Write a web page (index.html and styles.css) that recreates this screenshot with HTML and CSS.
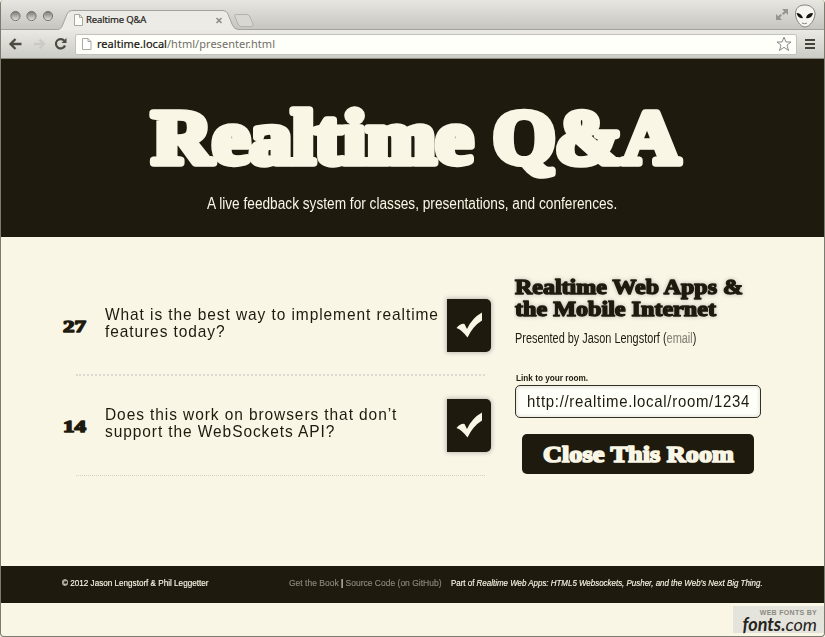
FILE: index.html
```html
<!DOCTYPE html>
<html lang="en">
<head>
<meta charset="utf-8">
<title>Realtime Q&amp;A</title>
<link rel="stylesheet" href="styles.css">
</head>
<body>
<div class="window">
  <div class="chrome">
    <svg class="tabs" width="825" height="30" viewBox="0 0 825 30">
      <defs>
        <linearGradient id="ball" x1="0" y1="0" x2="0" y2="1"><stop offset="0" stop-color="#77766f"/><stop offset="1" stop-color="#e5e4de"/></linearGradient>
      </defs>
      <g fill="url(#ball)" stroke="#777670"><circle cx="15.500" cy="16" r="4.600"/><circle cx="31.500" cy="16" r="4.600"/><circle cx="48" cy="16" r="4.600"/></g>
      <path d="M0 29.500H57C61 29.500 62 27 63 24L67 14Q68.500 10.500 72 10.500H223Q226.500 10.500 228 14L232 24Q234 29.500 238 29.500H825V31H0Z" fill="#ecebe5"/>
      <path d="M0 29.500H57C61 29.500 62 27 63 24L67 14Q68.500 10.500 72 10.500H223Q226.500 10.500 228 14L232 24Q234 29.500 238 29.500H825" fill="none" stroke="#a3a29b"/>
      <path d="M236 14.500H247Q249 14.500 250 17L253 24Q254 26.500 251 26.500H241Q239 26.500 238 24L235 17Q234 14.500 236 14.500Z" fill="#d8d7d1" stroke="#b3b2ab"/>
      <path d="M74.500 14.500H79.500L82.500 17.500V25.500H74.500ZM79.500 14.500V17.500H82.500" fill="#fdfdf8" stroke="#aaa9a2"/>
      <path d="M216.500 18L221.500 23M221.500 18L216.500 23" stroke="#8b8a82" stroke-width="1.500"/>
      <path d="M782 9H788V15L785.800 12.800L783.500 15L782 13.500L784.200 11.200ZM776 14V20H782L779.800 17.800L782 15.500L780.500 14L778.200 16.200Z" fill="#96958e"/>
      <path d="M805 5C811 5 815 9 815 14C815 19 810 27 805 27C800 27 795.500 19 795.500 14C795.500 8 799 5 805 5Z" fill="#f6f5ef" stroke="#85847b"/>
      <path d="M796.500 13Q801 13 803 18Q798 19 796.500 13ZM813 13Q807 13 806 18Q812 19 813 13Z" fill="#16150f"/>
      <path d="M802 23Q804.500 24.500 807 23" fill="none" stroke="#85847b"/>
    </svg>
    <span class="tab-title">Realtime Q&amp;A</span>
    <div class="toolbar">
      <svg class="nav" width="70" height="28" viewBox="0 0 70 28">
        <path d="M10 14H20.500M14.500 9L9.500 14L14.500 19" fill="none" stroke="#4d4b41" stroke-width="2.300"/>
        <path d="M33 14H42M38.500 9.500L43 14L38.500 18.500" fill="none" stroke="#cbcac4" stroke-width="2.300"/>
        <path d="M63.300 10.800A4.700 4.700 0 1 0 64 15.500" fill="none" stroke="#4d4b41" stroke-width="2.200"/><path d="M65.500 8V13H60.500Z" fill="#4d4b41"/>
      </svg>
      <div class="address">
        <svg width="12" height="14" viewBox="0 0 12 14"><path d="M1.500 1.500H7L10 4.500V12.500H1.500ZM7 1.500V4.500H10" fill="#fff" stroke="#aaa9a2"/></svg>
        <span class="url"><b>realtime.local</b>/html/presenter.html</span>
        <svg class="star" width="16" height="16" viewBox="0 0 16 16"><path d="M8 1.200L10 6H15L11 9.200L12.500 14.500L8 11.300L3.500 14.500L5 9.200L1 6H6Z" fill="#fff" stroke="#88877f"/></svg>
      </div>
      <svg width="12" height="12" viewBox="0 0 12 12"><path d="M0 2H10M0 6H10M0 10H10" stroke="#45433a" stroke-width="2.200"/></svg>
    </div>
  </div>

  <header class="hero">
    <h1><svg width="560" height="100" viewBox="0 0 560 100"><g class="display big"><text x="19" y="68" textLength="321" lengthAdjust="spacingAndGlyphs">Realtime</text><text x="360" y="68" textLength="187" lengthAdjust="spacingAndGlyphs">Q&amp;A</text></g></svg></h1>
    <p>A live feedback system for classes, presentations, and conferences.</p>
  </header>

  <main class="content">
    <ul class="questions">
      <li><svg class="votes" width="26" height="20" viewBox="0 0 26 20"><text class="display count" x="1" y="15.500" textLength="23" lengthAdjust="spacingAndGlyphs">27</text></svg>
        <p><span>What is the best way to implement realtime<br>features today?</span></p>
        <button aria-label="Answered"><svg width="44" height="53" viewBox="0 0 44 53"><path d="M9.500 29Q14 24 17.500 25L20 30Q25 19 35 13.500V21.500Q26 27 20.500 38.500Q15 31 9.500 29Z" fill="#faf6e6"/></svg></button></li>
      <li><svg class="votes" width="26" height="20" viewBox="0 0 26 20"><text class="display count" x="1" y="15.500" textLength="23" lengthAdjust="spacingAndGlyphs">14</text></svg>
        <p><span>Does this work on browsers that don’t<br>support the WebSockets API?</span></p>
        <button aria-label="Answered"><svg width="44" height="53" viewBox="0 0 44 53"><path d="M9.500 29Q14 24 17.500 25L20 30Q25 19 35 13.500V21.500Q26 27 20.500 38.500Q15 31 9.500 29Z" fill="#faf6e6"/></svg></button></li>
    </ul>
    <aside class="room">
      <h2><svg width="250" height="54" viewBox="0 0 250 54"><g class="display medium"><text x="1" y="20" textLength="228" lengthAdjust="spacingAndGlyphs">Realtime Web Apps &amp;</text><text x="1" y="42" textLength="201" lengthAdjust="spacingAndGlyphs">the Mobile Internet</text></g></svg></h2>
      <p class="by">Presented by Jason Lengstorf (<a>email</a>)</p>
      <p class="label">Link to your room.</p>
      <div class="field"><span>http://realtime.local/room/1234</span></div>
      <div class="close"><svg width="232" height="40" viewBox="0 0 232 40"><text class="display action" x="21" y="28" textLength="191" lengthAdjust="spacingAndGlyphs">Close This Room</text></svg></div>
    </aside>
  </main>

  <footer class="footer">
    <div class="copy"><span>© 2012 Jason Lengstorf &amp; Phil Leggetter</span></div>
    <div class="links"><span><a>Get the Book</a> | <a>Source Code (on GitHub)</a></span></div>
    <div class="part"><span>Part of <i>Realtime Web Apps: HTML5 Websockets, Pusher, and the Web’s Next Big Thing.</i></span></div>
  </footer>
  <div class="fonts"><span class="small">WEB FONTS BY</span><span class="brand"><b>fonts.</b>com</span></div>
</div>
</body>
</html>
```
FILE: styles.css
```css
* { box-sizing: border-box; }
body { margin: 0; background: #faf6e6; color: #1e1b0e; font-family: "Liberation Sans", sans-serif; }
h1, h2, p, ul { margin: 0; padding: 0; font-weight: normal; }
svg { display: block; flex: none; }
.window { width: 825px; height: 637px; border: 1px solid #7d7b70; border-top: 0; border-radius: 4px; display: flex; flex-direction: column; overflow: hidden; position: relative; }
.chrome { height: 59px; flex: none; position: relative; background: linear-gradient(#e7e6e0, #c7c6c1 28px); }
.tabs { margin-left: -1px; }
.tab-title { position: absolute; left: 85px; top: 14px; font: 9.5px/12px "Noto Sans", sans-serif; color: #25241e; white-space: nowrap; -webkit-text-stroke: .2px; letter-spacing: -.15px; }
.toolbar { height: 29px; display: flex; align-items: center; background: linear-gradient(#eae9e3, #ccccc7); border-bottom: 1px solid #8b8a82; }
.address { width: 722px; height: 21px; margin: 0 8px 0 4px; padding: 0 4px 0 5px; display: flex; align-items: center; background: #fffffa; border: 1px solid #c3c2bc; border-radius: 2px; }
.url { margin-left: 4px; font: 11px/14px "Noto Sans", sans-serif; color: #706f66; white-space: nowrap; letter-spacing: .03px; }
.url b { font-weight: normal; color: #17160f; -webkit-text-stroke: .2px; }
.star { margin-left: auto; }
.hero { height: 178px; flex: none; padding-top: 36px; background: #1e1b0e; color: #faf6e6; display: flex; flex-direction: column; align-items: center; }
.hero h1 { height: 100px; }
.hero p { font-size: 16px; line-height: 18px; white-space: nowrap; transform: scaleX(.854); }

/* Heavy rounded slab lettering */
.display { font-family: "Liberation Serif", serif; font-weight: bold; stroke-linejoin: round; }
.big { font-size: 77px; fill: #faf6e6; stroke: #faf6e6; stroke-width: 7.5px; }
.count { font-size: 16px; fill: #1e1b0e; stroke: #1e1b0e; stroke-width: 1.4px; }
.medium { font-size: 20px; fill: #1e1b0e; stroke: #1e1b0e; stroke-width: 1.4px; filter: drop-shadow(0 0 2px #bbb9ad); }
.action { font-size: 23px; fill: #faf6e6; stroke: #faf6e6; stroke-width: 1.7px; }

/* Condensed running text */
.by, .label, .field span, .questions p span, .footer span { transform-origin: 0 50%; }
.questions p span, .field span, .footer span { display: inline-block; }

.content { height: 329px; flex: none; display: flex; padding: 39px 0 0 61px; }
.questions { width: 423px; list-style: none; }
.questions li { height: 100px; display: flex; align-items: center; position: relative; }
.questions li::after { content: ""; position: absolute; left: 14px; right: 0; bottom: 0; border-bottom: 1px dotted #d2d1c8; }
.questions li:first-child::after { border-bottom: 2px dotted #dcdbd2; }
.questions p { margin: -6px 0 0 17px; width: 341px; flex: none; font-size: 17px; line-height: 17px; letter-spacing: 1px; white-space: nowrap; }
.questions p span { transform: scaleX(.912); }
.questions button { flex: none; width: 44px; height: 53px; margin: -1px -8px 0 1px; padding: 0; border: 0; border-radius: 0 5px 5px 0; background: #1e1b0e; box-shadow: 0 0 4px 1px #bbbab2; }
.room { margin-left: 29px; width: 247px; }
.room h2 { height: 54px; margin-top: -2px; }
.by { font-size: 14px; line-height: 16px; white-space: nowrap; margin: 2px 0 0 1px; transform: scaleX(.779); }
.by a { color: #8b897c; -webkit-text-stroke: .2px; }
.label { margin: 25px 0 0 2px; font-size: 9.5px; line-height: 14px; font-weight: bold; white-space: nowrap; transform: scaleX(.865); }
.field { width: 246px; height: 33px; margin-left: 1px; padding-left: 11px; border: 1px solid #333124; border-radius: 5px; background: #fffffa; font-size: 17px; line-height: 31px; letter-spacing: .8px; white-space: nowrap; box-shadow: inset 0 0 4px #d4d3c8; }
.field span { transform: scaleX(.88); }
.close { width: 232px; height: 40px; margin: 16px 0 0 8px; border-radius: 5px; background: #1e1b0e; }
.footer { height: 37px; flex: none; padding: 0 0 3px 61px; display: flex; align-items: center; background: #1e1b0e; color: #faf6e6; font-size: 9.5px; line-height: 12px; white-space: nowrap; -webkit-text-stroke: .15px; }
.copy { width: 227px; }
.links { width: 162px; }
.part { width: 320px; }
.copy span { transform: scaleX(.855); }
.links span { transform: scaleX(.895); }
.part span { transform: scaleX(.836); }
.links a { color: #8b897c; }
.fonts { position: absolute; right: 0; bottom: 3px; width: 91px; height: 27px; padding-right: 7px; display: flex; flex-direction: column; align-items: flex-end; background: #e5e4dc; color: #25241d; }
.small { font: bold 7px/8px "Liberation Sans", sans-serif; color: #8b8a82; letter-spacing: .3px; margin-top: 3px; }
.brand { font: italic 18px/14px Lato, sans-serif; }
```
